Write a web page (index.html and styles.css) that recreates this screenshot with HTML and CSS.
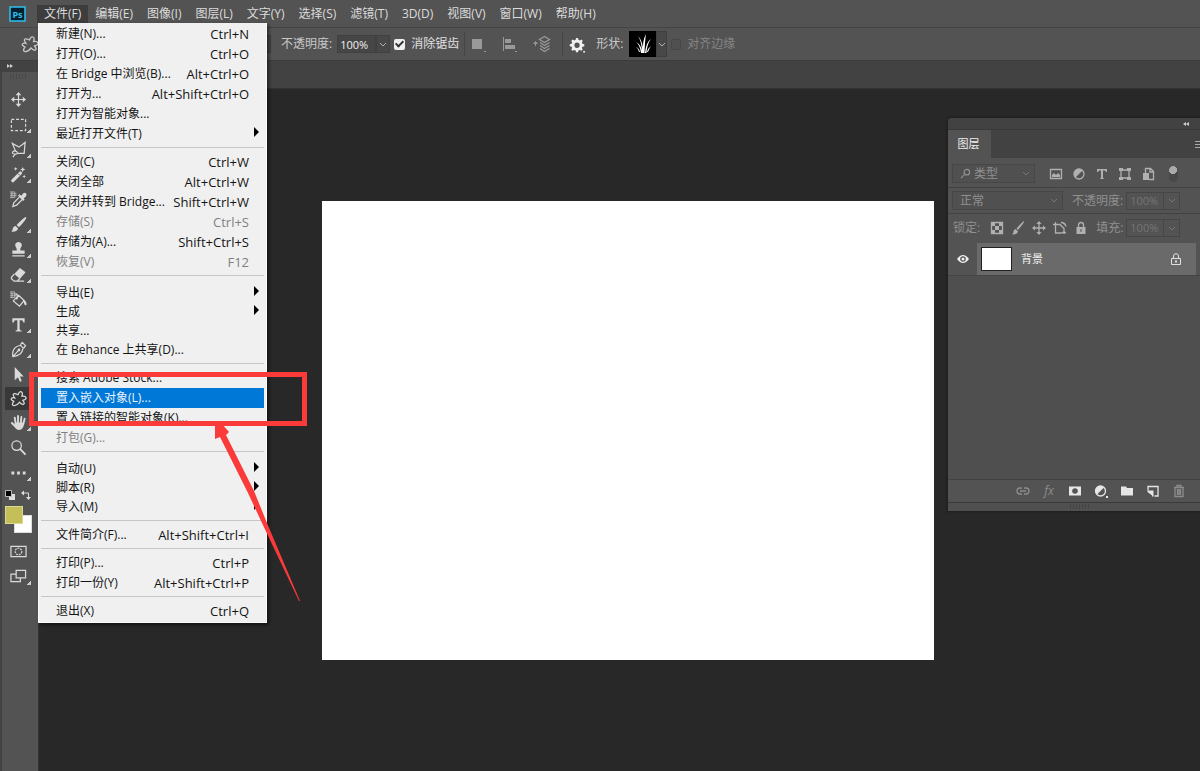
FILE: index.html
```html
<!DOCTYPE html>
<html lang="zh-CN">
<head>
<meta charset="utf-8">
<title>Photoshop</title>
<link rel="stylesheet" href="styles.css">
</head>
<body class="app">
<header class="menubar">
  <svg class="logo" viewBox="0 0 18 16" role="img" aria-label="Ps"><rect x="1" y="1" width="15" height="14" fill="#04202f" stroke="#2fc0ee" stroke-width="1.5"/><text x="8.500" y="11.500" class="logo-text">Ps</text></svg>
  <nav class="menus">
    <div class="menu-root">
      <button class="menu-title is-open">文件(F)</button>
      <div class="dropdown">
        <div class="group">
          <button class="item"><span>新建(N)...</span><kbd>Ctrl+N</kbd></button>
          <button class="item"><span>打开(O)...</span><kbd>Ctrl+O</kbd></button>
          <button class="item"><span>在 Bridge 中浏览(B)...</span><kbd>Alt+Ctrl+O</kbd></button>
          <button class="item"><span>打开为...</span><kbd>Alt+Shift+Ctrl+O</kbd></button>
          <button class="item"><span>打开为智能对象...</span></button>
          <button class="item has-sub"><span>最近打开文件(T)</span></button>
        </div>
        <div class="group">
          <button class="item"><span>关闭(C)</span><kbd>Ctrl+W</kbd></button>
          <button class="item"><span>关闭全部</span><kbd>Alt+Ctrl+W</kbd></button>
          <button class="item"><span>关闭并转到 Bridge...</span><kbd>Shift+Ctrl+W</kbd></button>
          <button class="item" disabled><span>存储(S)</span><kbd>Ctrl+S</kbd></button>
          <button class="item"><span>存储为(A)...</span><kbd>Shift+Ctrl+S</kbd></button>
          <button class="item" disabled><span>恢复(V)</span><kbd>F12</kbd></button>
        </div>
        <div class="group group-tight">
          <button class="item has-sub"><span>导出(E)</span></button>
          <button class="item has-sub"><span>生成</span></button>
          <button class="item"><span>共享...</span></button>
          <button class="item"><span>在 Behance 上共享(D)...</span></button>
        </div>
        <div class="group">
          <button class="item"><span>搜索 Adobe Stock...</span></button>
          <button class="item is-active"><span>置入嵌入对象(L)...</span></button>
          <button class="item"><span>置入链接的智能对象(K)...</span></button>
          <button class="item" disabled><span>打包(G)...</span></button>
        </div>
        <div class="group group-tight">
          <button class="item has-sub"><span>自动(U)</span></button>
          <button class="item has-sub"><span>脚本(R)</span></button>
          <button class="item has-sub"><span>导入(M)</span></button>
        </div>
        <div class="group">
          <button class="item"><span>文件简介(F)...</span><kbd>Alt+Shift+Ctrl+I</kbd></button>
        </div>
        <div class="group">
          <button class="item"><span>打印(P)...</span><kbd>Ctrl+P</kbd></button>
          <button class="item"><span>打印一份(Y)</span><kbd>Alt+Shift+Ctrl+P</kbd></button>
        </div>
        <div class="group">
          <button class="item"><span>退出(X)</span><kbd>Ctrl+Q</kbd></button>
        </div>
      </div>
    </div>
    <button class="menu-title">编辑(E)</button>
    <button class="menu-title">图像(I)</button>
    <button class="menu-title">图层(L)</button>
    <button class="menu-title">文字(Y)</button>
    <button class="menu-title">选择(S)</button>
    <button class="menu-title">滤镜(T)</button>
    <button class="menu-title">3D(D)</button>
    <button class="menu-title">视图(V)</button>
    <button class="menu-title">窗口(W)</button>
    <button class="menu-title">帮助(H)</button>
  </nav>
</header>

<section class="options">
  <div class="options-tool">
    <svg class="icon" viewBox="0 0 18 18"><path class="line" d="M8.500 5Q10 1 12 2t.5 4.500q4-.5 4.500 1.500t-3.500 3q2.500 3 1 4t-4.500-2q-3 4-6 3.500T4 12Q.5 10.500 1.500 9t3.500-.5Q2.500 4.500 4 4t4.500 1z"/></svg>
  </div>
  <button class="chevron chevron-edge" aria-label="模式"><svg viewBox="0 0 8 5"><path d="M1 1l3 3 3-3"/></svg></button>
  <label class="opt-label" for="opacity">不透明度:</label>
  <input class="field" id="opacity" value="100%">
  <button class="chevron" aria-label="不透明度选项"><svg viewBox="0 0 8 5"><path d="M1 1l3 3 3-3"/></svg></button>
  <input class="tick" type="checkbox" id="antialias" checked>
  <label class="opt-strong" for="antialias">消除锯齿</label>
  <span class="divider"></span>
  <div class="path-tools">
    <button class="dim" aria-label="路径操作"><svg class="icon" viewBox="0 0 18 18"><path fill="currentColor" d="M3 4h10v10H3zM15 16h2v1h-2z"/></svg></button>
    <button class="dim" aria-label="路径对齐方式"><svg class="icon" viewBox="0 0 18 18"><path fill="currentColor" d="M2 2h1v14H2zM4 4h6v4H4zM4 10h10v4H4zM14 16h2v1h-2z"/></svg></button>
    <button class="dim" aria-label="路径排列方式"><svg class="icon" viewBox="0 0 18 18"><path class="line" d="M11.500 1.500l5 3-5 3-5-3zM7 7.500l4.500 3 5-3M7 10.500l4.500 3 5-3M7 13.500l4.500 3 5-3"/><path fill="currentColor" d="M2.500 6l2.500 3H3v2H2V9H0z"/></svg></button>
  </div>
  <span class="divider"></span>
  <button class="gear" aria-label="设置"><svg class="icon" viewBox="0 0 18 18"><path fill="currentColor" fill-rule="evenodd" d="M7.500 2h2l.5 2 1.500.7 1.700-1 1.400 1.500-1 1.800.6 1.300 2 .5v2l-2 .5-.6 1.300 1 1.700-1.400 1.400-1.700-1-1.500.6-.5 2h-2l-.5-2-1.400-.6-1.800 1-1.400-1.400 1-1.700-.6-1.300-2-.5v-2l2-.5.6-1.300-1-1.800 1.400-1.500 1.800 1L7 4zM8.500 7a2.800 2.800 0 100 5.600 2.800 2.800 0 000-5.600zM15 16h2v1.500h-2z"/></svg></button>
  <span class="opt-label">形状:</span>
  <button class="shape-preview" aria-label="草"><svg viewBox="0 0 26 26"><path fill="#fff" d="M12 22Q12 11 8 5q5 5 5.500 17zM13 22Q12 10 16 3q-1 6-1.500 19zM11 22q-1-8-5-11 5 2 6.500 11zM15 22q1-11 6-14-4 5-4.500 14zM17 21q1-4 4-6-2 3-3 6zM9 21q-1-4-3-5 3 1 4 5z"/></svg></button>
  <button class="chevron chevron-shape" aria-label="选择形状"><svg viewBox="0 0 8 5"><path d="M1 1l3 3 3-3"/></svg></button>
  <input class="tick tick-dim" type="checkbox" id="edges" disabled>
  <label class="opt-dim" for="edges">对齐边缘</label>
</section>

<div class="body">
  <aside class="toolbar">
    <div class="toolbar-head"><svg viewBox="0 0 8 6"><path fill="#ccc" d="M1 1l3 2-3 2zM4 1l3 2-3 2z"/></svg></div>
    <div class="grip"></div>
    <div class="tools">
      <button class="tool" aria-label="移动"><svg class="icon" viewBox="0 0 18 18"><path class="line" d="M9 3v12M3 9h12"/><path fill="currentColor" d="M9 1l3 3.500H6zM9 17l3-3.500H6zM1 9l3.500-3v6zM17 9l-3.500-3v6z"/></svg></button>
      <button class="tool more" aria-label="矩形选框"><svg class="icon" viewBox="0 0 18 18"><path class="line" stroke-dasharray="3 2" d="M1.500 3.500h15v12h-15z"/></svg></button>
      <button class="tool more" aria-label="多边形套索"><svg class="icon" viewBox="0 0 18 18"><path class="line" d="M6 11L2.500 2.500l7 4 6.500-5-1 11.500H8"/><path class="line" d="M7.500 11.500q-3-2-4.500 0t2.500 2.500q3 0 2-2.500M5.500 14l-2.500 3"/></svg></button>
      <button class="tool more" aria-label="魔棒"><svg class="icon" viewBox="0 0 18 18"><path stroke="currentColor" stroke-width="3.500" stroke-linecap="round" d="M3 15.500l8-8"/><path stroke="#444" d="M8.500 8l2 2"/><path fill="currentColor" d="M6 1l.6 1.500L8 3l-1.400.6L6 5l-.6-1.400L4 3l1.400-.5zM13.500 1l.8 2 2 .8-2 .8-.8 2-.8-2-2-.8 2-.8zM15 9l.6 1.500 1.400.5-1.400.6L15 13l-.6-1.400L13 11l1.400-.5z"/></svg></button>
      <button class="tool" aria-label="吸管"><svg class="icon" viewBox="0 0 18 18"><path fill="currentColor" d="M12 5l2-2.500q2-1.500 3 0t0 3L14.500 8l1 1-1.500 1.500L8.500 5 10 3.500z"/><path class="line" d="M10 6.500l-6 6-1 4 4-1.500 6-6"/><path class="line thin" d="M0 1h5v6H0M0 3h7M0 5h7M2 1v6"/></svg></button>
      <button class="tool more" aria-label="画笔"><svg class="icon" viewBox="0 0 18 18"><path fill="currentColor" d="M17 1q1.500 1.500-7.500 11L7 9.500Q15.500.500 17 1zM6 10.500l2.500 2.500q-.5 4-7 3.500Q3 15.500 3 13q1-2.500 3-2.500z"/></svg></button>
      <button class="tool more" aria-label="仿制图章"><svg class="icon" viewBox="0 0 18 18"><path fill="currentColor" d="M9 1a3.300 3.300 0 013 5Q10.500 8 11 10h4.500v3.500h-13V10H7q.5-2-1-4a3.300 3.300 0 013-5zM2.500 15h13v1.500h-13z"/></svg></button>
      <button class="tool more" aria-label="橡皮擦"><svg class="icon" viewBox="0 0 18 18"><path fill="currentColor" d="M10.500 2l6 4.500-6 7-6-5z"/><path class="line" d="M4.500 8.500L1.500 12v1.500l3 2.500h3l3-3M8 16h7"/></svg></button>
      <button class="tool" aria-label="油漆桶"><svg class="icon" viewBox="0 0 18 18"><path class="line" d="M9 4.500l6 5.500-5 6-6.500-5.500zM9 4.500L7 9M8 5q-1-3-2-1"/><path fill="currentColor" d="M14 9q4 2 3.500 5.500-2 1.500-2.500-1z"/><path class="line thin" d="M0 1h5v6H0M0 3h7M0 5h7M2 1v6"/></svg></button>
      <button class="tool more" aria-label="横排文字"><svg class="icon" viewBox="0 0 18 18"><path fill="currentColor" d="M2.500 2.500h13V7H14q0-2.500-2-2.500h-1.800V14q0 1.300 2 1.300v1H6v-1q1.800 0 1.800-1.300V4.500H6Q4 4.500 4 7H2.500z"/></svg></button>
      <button class="tool more" aria-label="钢笔"><svg class="icon" viewBox="0 0 18 18"><path class="line" d="M3 16.500q-1-5 2-9 2-2 6-3l3 3q-1 4-3 6-3 2.500-8 3zM3 16.500L9 10M11 4L13 1.500l3.500 3.500L14.500 7.500"/><circle cx="9.500" cy="9.500" r="1.500" fill="currentColor"/></svg></button>
      <button class="tool" aria-label="路径选择"><svg class="icon" viewBox="0 0 18 18"><path fill="currentColor" d="M5 1l9.500 10h-4l2 5-2 .8-2.200-5L5 15z"/></svg></button>
      <button class="tool is-selected" aria-label="自定形状"><svg class="icon" viewBox="0 0 18 18"><path class="line" d="M8.500 5Q10 1 12 2t.5 4.500q4-.5 4.500 1.500t-3.500 3q2.500 3 1 4t-4.500-2q-3 4-6 3.500T4 12Q.5 10.500 1.500 9t3.500-.5Q2.500 4.500 4 4t4.500 1z"/></svg></button>
      <button class="tool more" aria-label="抓手"><svg class="icon" viewBox="0 0 18 18"><path fill="none" stroke="currentColor" stroke-width="2" stroke-linecap="round" d="M6 10L5 4M8.500 9V2M11.500 9.500L12 3M14 11l1.500-6M5.500 13L2 9.500"/><path fill="currentColor" d="M5 9h10q-.5 8-5.500 8-3 0-5-4z"/></svg></button>
      <button class="tool" aria-label="缩放"><svg class="icon" viewBox="0 0 18 18"><circle class="line" cx="7" cy="7" r="5"/><path stroke="currentColor" stroke-width="2" d="M10.500 10.500l6 6"/></svg></button>
      <button class="tool more" aria-label="编辑工具栏"><svg class="icon" viewBox="0 0 18 18"><path fill="currentColor" d="M1.500 8h3v3h-3zM7.500 8h3v3h-3zM13.500 8h3v3h-3z"/></svg></button>
    </div>
    <div class="swatch-mini">
      <button aria-label="默认颜色"><svg viewBox="0 0 10 10"><path fill="#ddd" d="M4 4h6v6H4z"/><path fill="#000" stroke="#bbb" d="M.5.500h6v6h-6z"/></svg></button>
      <button aria-label="切换颜色"><svg viewBox="0 0 10 10"><path fill="none" stroke="#ddd" d="M2 3h5.500v5"/><path fill="#ddd" d="M0 3l3-2.500v5zM7.500 10L5 7h5z"/></svg></button>
    </div>
    <div class="swatches"><button class="swatch swatch-back" aria-label="背景色"></button><button class="swatch swatch-front" aria-label="前景色"></button></div>
    <div class="tools">
      <button class="tool" aria-label="快速蒙版"><svg class="icon" viewBox="0 0 18 18"><path class="line" d="M1 3.500h16v11H1z"/><circle class="line" stroke-dasharray="2 1" cx="9" cy="9" r="3.500"/></svg></button>
      <button class="tool more" aria-label="屏幕模式"><svg class="icon" viewBox="0 0 18 18"><path class="line" d="M6.500 2.500h10v8h-10zM6 6.500H1v8h10V11"/></svg></button>
    </div>
  </aside>

  <main class="workspace">
    <div class="tab-strip"></div>
    <div class="stage"><div class="document"></div></div>
  </main>
</div>

<section class="panel" aria-label="图层面板">
  <div class="panel-top"><svg viewBox="0 0 8 6"><path fill="#ccc" d="M4 1L1 3l3 2zM7 1L4 3l3 2z"/></svg></div>
  <div class="panel-tabs"><button class="panel-tab">图层</button><svg class="burger" viewBox="0 0 5 8"><path stroke="#aaa" d="M0 1.500h5M0 4.500h5M0 7.500h5"/></svg></div>
  <div class="row row-filter">
    <div class="pick pick-type">
      <svg class="search" viewBox="0 0 12 12"><circle class="line" cx="7.500" cy="4.500" r="3"/><path class="line" d="M5 7l-4 4"/></svg>
      <select aria-label="类型"><option>类型</option></select>
      <svg class="caret" viewBox="0 0 8 5"><path d="M1 1l3 3 3-3"/></svg>
    </div>
    <div class="filters">
      <button aria-label="像素"><svg viewBox="0 0 14 14"><path class="line" d="M1.500 2.500h11v9h-11z"/><path fill="currentColor" d="M3 10V8l2-2 2 2 2-2 2 2v2z"/></svg></button>
      <button aria-label="调整"><svg viewBox="0 0 14 14"><circle class="line" cx="7" cy="7" r="5"/><path fill="currentColor" d="M10.500 3.500l-7 7A5 5 0 013 4q3-4 7.500-.5z"/></svg></button>
      <button aria-label="文字"><svg viewBox="0 0 14 14"><path fill="currentColor" d="M2 2h10v3h-1l-1-1.500H8V11l1.500 1H4.500L6 11V3.500H4L3 5H2z"/></svg></button>
      <button aria-label="形状"><svg viewBox="0 0 14 14"><path class="line" d="M3 3h8v8H3z"/><path fill="currentColor" d="M1 1h4v3H1zM9 1h4v3H9zM1 10h4v3H1zM9 10h4v3H9z"/></svg></button>
      <button aria-label="智能对象"><svg viewBox="0 0 14 14"><path class="line" d="M4.500 6V1.500h5l3 3v8H8M9 2v3h3"/><path fill="currentColor" d="M2 6h6v7H2z"/></svg></button>
    </div>
    <span class="toggle"></span>
  </div>
  <div class="row">
    <div class="pick pick-mode">
      <select aria-label="混合模式"><option>正常</option></select>
      <svg class="caret" viewBox="0 0 8 5"><path d="M1 1l3 3 3-3"/></svg>
    </div>
    <label class="row-label" for="layer-opacity">不透明度:</label>
    <div class="combo"><input id="layer-opacity" value="100%"><button aria-label="不透明度滑块"><svg class="caret" viewBox="0 0 8 5"><path d="M1 1l3 3 3-3"/></svg></button></div>
  </div>
  <div class="row row-lock">
    <span class="lock-label">锁定:</span>
    <div class="locks">
      <button aria-label="锁定透明像素"><svg viewBox="0 0 14 14"><path class="line" d="M1.500 1.500h11v11h-11z"/><path fill="currentColor" d="M2 2h3v3H2zM9 2h3v3H9zM5 5h4v4H5zM2 9h3v3H2zM9 9h3v3H9z"/></svg></button>
      <button aria-label="锁定图像像素"><svg viewBox="0 0 14 14"><path fill="currentColor" d="M13 0q1 1-6 9L5.500 7.500Q12 0 13 0zM4.500 8L7 10.500Q6 14 1 13.500q1.500-1 1.500-3t2-2.500z"/></svg></button>
      <button aria-label="锁定位置"><svg viewBox="0 0 14 14"><path class="line" d="M7 2v10M2 7h10"/><path fill="currentColor" d="M7 0l2.500 3h-5zM7 14l2.500-3h-5zM0 7l3-2.500v5zM14 7l-3-2.500v5z"/></svg></button>
      <button aria-label="防止嵌套"><svg viewBox="0 0 14 14"><path class="line" d="M2.500 1v11H9M0 3.500h7l4 4V13M8 1.500q4 0 5 4M9 11.500h4"/></svg></button>
      <button aria-label="锁定全部"><svg viewBox="0 0 14 14"><path fill="currentColor" d="M2.500 6h9v7h-9z"/><path class="line" stroke-width="1.500" d="M4.500 6V4q0-2.500 2.500-2.500T9.500 4v2"/><path fill="#535353" d="M6.500 8h1v3h-1z"/></svg></button>
    </div>
    <label class="fill-label" for="layer-fill">填充:</label>
    <div class="combo"><input id="layer-fill" value="100%"><button aria-label="填充滑块"><svg class="caret" viewBox="0 0 8 5"><path d="M1 1l3 3 3-3"/></svg></button></div>
  </div>
  <div class="layers">
    <div class="layer">
      <button class="eye" aria-label="可见性"><svg viewBox="0 0 12 8"><path fill="#f0f0f0" fill-rule="evenodd" d="M0 4q6-8 12 0-6 8-12 0zM6 1.200a2.800 2.800 0 100 5.600 2.800 2.800 0 000-5.600z"/><circle cx="6" cy="4" r="1.500" fill="#f0f0f0"/></svg></button>
      <div class="layer-body">
        <span class="thumb"></span><span class="layer-name">背景</span>
        <svg class="padlock" viewBox="0 0 12 12"><path fill="none" stroke="#e0e0e0" d="M1.500 5.500h9v6h-9zM3.500 5.500V3Q3.500.700 6 .700T8.500 3v2.500"/><path fill="#e0e0e0" d="M5 7.500h2v2H5z"/></svg>
      </div>
    </div>
  </div>
  <div class="panel-foot">
    <button class="off" aria-label="链接图层"><svg viewBox="0 0 14 14"><path class="line" d="M6 4H4Q1 4 1 7t3 3h2M8 4h2q3 0 3 3t-3 3H8M4 7h6"/></svg></button>
    <button class="off fx" aria-label="图层样式">fx</button>
    <button aria-label="图层蒙版"><svg viewBox="0 0 14 14"><path fill="currentColor" fill-rule="evenodd" d="M1 2.500h12v9H1zM7 4.200a2.800 2.800 0 100 5.600 2.800 2.800 0 000-5.600z"/></svg></button>
    <button aria-label="调整图层"><svg viewBox="0 0 14 14"><circle class="line" cx="6.500" cy="7" r="5"/><path fill="currentColor" d="M10 3.500l-7 7A5 5 0 012.500 4q3-4 7.500-.5zM12 12h2v2h-2z"/></svg></button>
    <button aria-label="新建组"><svg viewBox="0 0 14 14"><path fill="currentColor" d="M1 2.500h5l1 1.500h6v7.500H1z"/></svg></button>
    <button aria-label="新建图层"><svg viewBox="0 0 14 14"><path class="line" stroke-width="1.500" d="M2 6.500V2.500h10v9.500H8.500"/><path fill="currentColor" d="M1.500 6.500h6v6L1.500 8zM6 6.500h1.500v6H6z"/></svg></button>
    <button class="off" aria-label="删除图层"><svg viewBox="0 0 14 14"><path class="line" d="M2 3.500h10M5 3V1.500h4V3M3 4v8.500h8V4M5.500 5v6M7 5v6M8.500 5v6"/></svg></button>
  </div>
  <div class="panel-handle"></div>
</section>

<div class="callout"></div>
<svg class="arrow" viewBox="0 0 86 182"><path fill="#fb3a3a" d="M1 2h6l8 9-3 3 28 56 13 32 33 78h-1L48 102 34 72 6 16l-5 2z"/></svg>
</body>
</html>
```

FILE: styles.css
```css
* { box-sizing: border-box; }
button, input, select { font: inherit; color: inherit; margin: 0; padding: 0; border: 0; background: none; }
button { display: flex; align-items: center; justify-content: center; white-space: nowrap; }
kbd { font: inherit; font-size: 13px; }
svg { display: block; flex: none; }
.line { fill: none; stroke: currentColor; stroke-width: 1.3; }
.thin { stroke-width: 1; opacity: 0.7; }
.icon { width: 18px; height: 18px; }

.app {
  position: relative; margin: 0; height: 100vh; min-height: 640px; overflow: hidden;
  display: flex; flex-direction: column;
  background: #282828; color: #dcdcdc;
  font: 12px/16px "Open Sans", "Noto Sans CJK SC", sans-serif;
}

/* Menu bar */
.menubar { display: flex; align-items: center; height: 27px; padding-left: 9px; background: #535353; }
.logo { width: 18px; height: 16px; margin-right: 10px; }
.logo-text { fill: #2fc0ee; font: bold 9px "Open Sans", sans-serif; text-anchor: middle; }
.menus { display: flex; height: 27px; }
.menu-root { position: relative; }
.menu-title { height: 27px; padding: 0 7px; }
.menu-title.is-open { height: 18px; margin-top: 5px; background: #3d3d3d; }

.dropdown {
  position: absolute; z-index: 5; top: 23px; left: 1px; width: 229px; padding: 1px 2px;
  background: #f0f0f0; border: 1px solid #fafafa; border-top: 0; color: #141414;
  box-shadow: 2px 2px 3px rgba(0, 0, 0, 0.5);
}
.group { padding-bottom: 3px; }
.group + .group { border-top: 1px solid #c6c6c6; padding-top: 4px; }
.group:last-child { padding-bottom: 0; }
.group-tight { padding-bottom: 4px; }
.group + .group-tight { padding-top: 7px; }
.item { width: 100%; height: 20px; padding: 0 15px; justify-content: space-between; position: relative; }
.group-tight .item { height: 19px; }
.item:disabled { color: #808080; }
.item.is-active { background: #0078d7; color: #e8f3fc; }
.has-sub::after {
  content: ""; position: absolute; right: 5px; top: 3px;
  border: 5px solid transparent; border-left-color: #000; border-right-width: 0;
}

/* Options bar */
.options {
  display: flex; align-items: center; height: 34px; flex: none;
  background: #535353; border-top: 1px solid #444; border-bottom: 1px solid #3c3c3c; color: #c8c8c8;
}
.options-tool { width: 257px; padding-left: 21px; color: #c8c8c8; }
.chevron { width: 14px; height: 18px; background: #484848; border: 1px solid #404040; }
.chevron svg, .caret { width: 8px; height: 5px; fill: none; stroke: #b0b0b0; }
.chevron-edge { margin-right: 10px; }
.opt-label { margin-right: 5px; }
.field { width: 39px; height: 18px; padding: 0 2px; background: #464646; border: 1px solid #404040; color: #f0f0f0; font-size: 11px; }
.tick {
  appearance: none; width: 11px; height: 11px; margin: 0 6px 0 4px; border-radius: 2px;
  background: #f0f0f0; display: grid; place-items: center;
}
.tick:checked::before { content: ""; width: 3px; height: 6px; margin-bottom: 2px; border: solid #333; border-width: 0 2px 2px 0; transform: rotate(45deg); }
.opt-strong { color: #e0e0e0; }
.divider { width: 1px; height: 24px; margin: 0 4px 0 5px; background: #454545; }
.path-tools { display: flex; gap: 14px; padding-right: 6px; }
.dim { color: #999; }
.gear { color: #f0f0f0; margin: 0 10px 0 2px; }
.gear .icon { width: 17px; height: 17px; }
.shape-preview { width: 27px; height: 26px; background: #000; margin-left: 1px; }
.shape-preview svg { width: 26px; height: 26px; }
.chevron-shape { width: 11px; height: 26px; }
.tick-dim { background: #505050; border: 1px solid #474747; width: 10px; }
.opt-dim { color: #858585; }

/* Body */
.body { flex: 1; display: flex; min-height: 0; }
.toolbar { width: 39px; flex: none; background: #535353; border-left: 2px solid #424242; border-right: 1px solid #333; display: flex; flex-direction: column; }
.toolbar-head { height: 11px; background: #424242; padding: 2px 4px; }
.toolbar-head svg, .panel-top svg { width: 8px; height: 6px; }
.grip { height: 5px; margin: 2px 10px 8px 8px; background: repeating-linear-gradient(90deg, #484848 0 1px, #535353 1px 3px); }
.tools { display: flex; flex-direction: column; color: #dadada; }
.tool { position: relative; height: 25px; width: 34px; padding-right: 1px; }
.tool .icon { width: 17px; height: 17px; }
.tool.is-selected { background: #383838; height: 23px; margin-left: 3px; width: 28px; }
.tool.more::after {
  content: ""; position: absolute; right: 5px; bottom: 4px; width: 4px; height: 4px;
  background: linear-gradient(135deg, transparent 50%, #ccc 50%);
}
.swatch-mini { display: flex; justify-content: space-between; padding: 5px 7px 5px 3px; }
.swatch-mini svg { width: 10px; height: 10px; }
.swatches { position: relative; height: 28px; margin-bottom: 6px; }
.swatch { position: absolute; width: 18px; height: 18px; background: #fff; border: 1px solid #ddd; }
.swatch-back { left: 12px; top: 10px; }
.swatch-front { left: 3px; top: 1px; background: #c5bf5a; border-color: #dcd88c; }

.workspace { flex: 1; display: flex; flex-direction: column; min-width: 0; }
.tab-strip { height: 28px; background: #424242; border-bottom: 1px solid #333; }
.stage { flex: 1; display: flex; padding: 112px 266px 111px 283px; }
.document { flex: 1; background: #fff; }

/* Layers panel */
.panel {
  position: absolute; left: 948px; right: 0; top: 118px; height: 393px;
  display: flex; flex-direction: column; background: #535353; color: #909090;
  border-radius: 4px 0 0 0; overflow: hidden; box-shadow: 0 0 2px 1px #1e1e1e;
}
.panel-top { height: 12px; padding: 3px 10px; display: flex; justify-content: flex-end; background: #424242; border-bottom: 1px solid #383838; }
.panel-tabs { height: 28px; display: flex; justify-content: space-between; align-items: center; background: #424242; }
.panel-tab { width: 43px; height: 28px; padding-right: 2px; background: #535353; color: #f0f0f0; font-size: 11px; }
.burger { width: 5px; height: 8px; }
.row { display: flex; align-items: center; height: 26px; padding-left: 4px; border-bottom: 1px solid #424242; flex: none; }
.row-filter { height: 30px; padding-top: 2px; }
.row-lock { height: 28px; border: 0; padding-left: 5px; }
.pick { display: flex; align-items: center; height: 19px; padding: 0 4px 0 7px; border: 1px solid #474747; background: #505050; }
.pick select { appearance: none; flex: 1; min-width: 0; line-height: 16px; }
.pick-type { width: 83px; }
.pick-mode { width: 111px; margin-right: 9px; }
.search { width: 11px; height: 11px; margin-right: 3px; }
.caret { stroke: #777; }
.filters, .locks { display: flex; color: #b0b0b0; }
.filters { gap: 9px; margin-left: 14px; }
.filters svg, .locks svg { width: 14px; height: 14px; }
.toggle { width: 9px; height: 16px; margin-left: 14px; border-radius: 5px; background: radial-gradient(circle at 4px 4px, #aaa 0 4px, #484848 4px); }
.row-label { margin-right: 3px; }
.combo { display: flex; height: 18px; border: 1px solid #464646; font-size: 11px; color: #757575; }
.combo input { width: 37px; padding-left: 3px; border-right: 1px solid #464646; }
.combo button { width: 15px; }
.lock-label { margin-right: 10px; }
.locks { gap: 7px; margin-right: 8px; }
.fill-label { margin-right: 3px; }
.layers { flex: 1; background: #4f4f4f; }
.layer { display: flex; height: 34px; border-bottom: 1px solid #454545; background: #535353; }
.eye { width: 29px; }
.eye svg { width: 12px; height: 8px; }
.layer-body { flex: 1; margin: 1px 4px 0 0; display: flex; align-items: center; background: #6a6a6a; padding: 0 14px 0 4px; color: #f0f0f0; font-size: 11px; }
.thumb { width: 31px; height: 24px; background: #fff; border: 1px solid #222; margin-right: 9px; }
.layer-name { flex: 1; }
.padlock { width: 12px; height: 12px; }
.panel-foot { display: flex; align-items: center; justify-content: flex-end; gap: 12px; height: 24px; padding-right: 14px; border-top: 1px solid #424242; border-bottom: 1px solid #3a3a3a; color: #e6e6e6; flex: none; }
.panel-foot svg { width: 14px; height: 14px; }
.panel-foot .off { color: #8c8c8c; }
.fx { width: 14px; font-style: italic; }
.panel-handle { height: 8px; background: repeating-linear-gradient(90deg, #444 0 1px, #505050 1px 3px) 122px 1px / 21px 5px no-repeat #505050; flex: none; }

/* Annotation over the menu */
.callout { position: absolute; z-index: 8; left: 29px; top: 372px; width: 278px; height: 54px; border: 5px solid #fb3a3a; }
.arrow { position: absolute; z-index: 8; left: 214px; top: 421px; width: 86px; height: 182px; }
```
